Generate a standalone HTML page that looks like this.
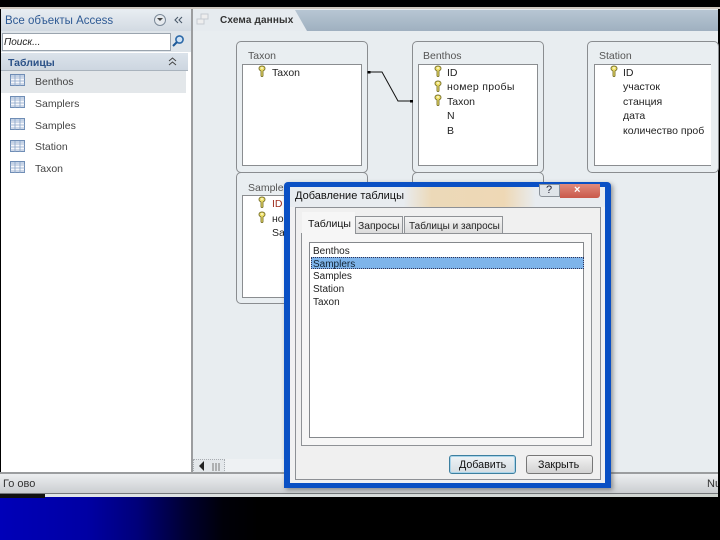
<!DOCTYPE html>
<html><head><meta charset="utf-8"><style>
html,body{margin:0;padding:0;background:#000}
#r{position:relative;width:720px;height:540px;overflow:hidden;background:#000;font-family:"Liberation Sans",sans-serif;font-size:10.5px;color:#222}
#r div,#r svg{position:absolute}
.t{white-space:nowrap;line-height:13px;margin-top:1px}
.box{width:130px;height:130px;border:1px solid #8a8d90;border-radius:5px;background:#e9eef1}
.in{background:#fff;border:1px solid #8a8d90}
.nm{color:#555;font-size:10.5px}
</style></head><body><div id="r">
<svg width="0" height="0" style="position:absolute"><defs>
<symbol id="k" viewBox="0 0 8 12"><path d="M4 1C2 1 1 2 1 3.500C1 5 2 5.500 3 6V11L4 12L5 11V6C6 5.500 7 5 7 3.500C7 2 6 1 4 1Z" fill="#efe06a" stroke="#77702a" stroke-width=".9"/><path d="M3 3h2" stroke="#fff" stroke-width="1"/></symbol>
<symbol id="g" viewBox="0 0 15 12"><rect x=".5" y=".5" width="14" height="11" fill="#f6f8fb" stroke="#6f8db5"/><rect x="1" y="1" width="13" height="2" fill="#c3d2e6"/><path d="M0 4h15M0 7h15M0 10h15M5 1v11M10 1v11" stroke="#8aa4c8" stroke-width=".8"/></symbol>
</defs></svg>

<div style="left:0;top:7px;width:720px;height:2px;background:#cfc8bf"></div>
<div style="left:1px;top:9px;width:717px;height:465px;background:#e8edf0"></div>

<!-- sidebar -->
<div style="left:1px;top:10px;width:190px;height:464px;background:#fff"></div>
<div style="left:1px;top:10px;width:190px;height:21px;background:linear-gradient(#e8edf2,#d2dae2)"></div>
<div class="t" style="left:5px;top:14px;font-size:11.500px;color:#2e5a94">Все объекты Access</div>
<div style="left:154px;top:14px;width:10px;height:10px;border:1px solid #7c8a99;border-radius:50%;background:#e6eaee"></div>
<svg style="left:156px;top:17px" width="8" height="6"><path d="M1 1L4 4L7 1Z" fill="#444"/></svg>
<svg style="left:174px;top:16px" width="9" height="8"><path d="M4 1L1 4L4 7M8 1L5 4L8 7" fill="none" stroke="#4a5a6a" stroke-width="1.1"/></svg>
<div style="left:1px;top:31px;width:190px;height:21px;background:#dfe5ea"></div>
<div style="left:2px;top:33px;width:167px;height:16px;background:#fff;border:1px solid #9aa4ae"></div>
<div class="t" style="left:4px;top:35px;font-style:italic;font-size:10px;color:#222">Поиск...</div>
<svg style="left:171px;top:34px" width="14" height="14"><circle cx="8.500" cy="5.500" r="3.600" fill="#cfe2f5" stroke="#2d6aa8" stroke-width="1.600"/><path d="M6 8L2 12" stroke="#1d5a98" stroke-width="2"/></svg>
<div style="left:1px;top:53px;width:187px;height:17px;background:linear-gradient(#dbe3eb,#cdd6e0);border-bottom:1px solid #a9b3bd"></div>
<div class="t" style="left:8px;top:56px;font-weight:bold;font-size:10.500px;color:#2c5288">Таблицы</div>
<svg style="left:168px;top:57px" width="9" height="10"><path d="M1 4L4.500 1L8 4M1 8L4.500 5L8 8" fill="none" stroke="#444" stroke-width="1"/></svg>
<div style="left:1px;top:71px;width:185px;height:22px;background:#e3e7ea"></div>
<svg style="left:10px;top:74px" width="15" height="12"><use href="#g"/></svg>
<svg style="left:10px;top:96px" width="15" height="12"><use href="#g"/></svg>
<svg style="left:10px;top:118px" width="15" height="12"><use href="#g"/></svg>
<svg style="left:10px;top:140px" width="15" height="12"><use href="#g"/></svg>
<svg style="left:10px;top:161px" width="15" height="12"><use href="#g"/></svg>
<div class="t" style="left:35px;top:75px;color:#444">Benthos</div>
<div class="t" style="left:35px;top:97px;color:#444">Samplers</div>
<div class="t" style="left:35px;top:119px;color:#444">Samples</div>
<div class="t" style="left:35px;top:140px;color:#444">Station</div>
<div class="t" style="left:35px;top:162px;color:#444">Taxon</div>
<div style="left:191px;top:9px;width:2px;height:465px;background:#9b9d9f"></div>

<!-- tab strip -->
<div style="left:193px;top:10px;width:525px;height:21px;background:linear-gradient(#b7c6d3,#9fb0c0)"></div>
<svg style="left:193px;top:10px" width="115" height="21"><path d="M0 0H102L114 21H0Z" fill="#e6ebef"/></svg>
<svg style="left:196px;top:13px" width="18" height="12"><path d="M5 1h7v5h-7zM1 6h7v5h-7z" fill="#eee" stroke="#c5cbd1"/></svg>
<div class="t" style="left:220px;top:13px;font-size:10px;font-weight:bold;color:#333;letter-spacing:.15px">Схема данных</div>

<!-- table boxes -->
<div class="box" style="left:236px;top:41px"></div>
<div class="box" style="left:412px;top:41px"></div>
<div class="box" style="left:587px;top:41px"></div>
<div class="box" style="left:236px;top:172px"></div>
<div class="box" style="left:412px;top:172px"></div>
<div class="nm t" style="left:248px;top:49px">Taxon</div>
<div class="nm t" style="left:423px;top:49px">Benthos</div>
<div class="nm t" style="left:599px;top:49px">Station</div>
<div class="nm t" style="left:248px;top:181px">Samplers</div>
<div class="in" style="left:242px;top:64px;width:118px;height:100px"></div>
<div class="in" style="left:418px;top:64px;width:118px;height:100px"></div>
<div class="in" style="left:594px;top:64px;width:116px;height:100px;border-right:none"></div>
<div class="in" style="left:242px;top:195px;width:118px;height:101px"></div>
<svg style="left:258px;top:65px" width="8" height="12"><use href="#k"/></svg>
<div class="t" style="left:272px;top:66px">Taxon</div>
<svg style="left:434px;top:65px" width="8" height="12"><use href="#k"/></svg>
<svg style="left:434px;top:80px" width="8" height="12"><use href="#k"/></svg>
<svg style="left:434px;top:94px" width="8" height="12"><use href="#k"/></svg>
<div class="t" style="left:447px;top:66px">ID</div>
<div class="t" style="left:447px;top:80px;letter-spacing:.3px">номер пробы</div>
<div class="t" style="left:447px;top:95px">Taxon</div>
<div class="t" style="left:447px;top:109px">N</div>
<div class="t" style="left:447px;top:124px">B</div>
<svg style="left:610px;top:65px" width="8" height="12"><use href="#k"/></svg>
<div class="t" style="left:623px;top:66px">ID</div>
<div class="t" style="left:623px;top:80px">участок</div>
<div class="t" style="left:623px;top:95px">станция</div>
<div class="t" style="left:623px;top:109px">дата</div>
<div class="t" style="left:623px;top:124px">количество проб</div>
<svg style="left:258px;top:196px" width="8" height="12"><use href="#k"/></svg>
<svg style="left:258px;top:211px" width="8" height="12"><use href="#k"/></svg>
<div class="t" style="left:272px;top:197px;color:#a03020">ID</div>
<div class="t" style="left:272px;top:212px">номер</div>
<div class="t" style="left:272px;top:226px">Sa</div>
<svg style="left:366px;top:68px" width="48" height="36"><path d="M2 4H16L32 33H46" fill="none" stroke="#111" stroke-width="1"/><rect x="1.500" y="3" width="3" height="2.500" fill="#000"/><rect x="44" y="32" width="3" height="2.500" fill="#000"/></svg>

<!-- scrollbar bottom -->
<div style="left:193px;top:459px;width:32px;height:14px;background:#e4e8eb;border:1px dotted #a8adb2;box-sizing:border-box"></div>
<svg style="left:198px;top:461px" width="8" height="10"><path d="M6 0V10L1 5Z" fill="#222"/></svg>
<svg style="left:211px;top:463px" width="10" height="8"><path d="M2 0v8M5 0v8M8 0v8" stroke="#777"/></svg>
<div style="left:225px;top:459px;width:60px;height:14px;background:#eef1f3"></div>

<!-- status bar -->
<div style="left:0;top:472px;width:718px;height:2px;background:#9b9d9f"></div>
<div style="left:0;top:474px;width:718px;height:20px;background:linear-gradient(#eceef0,#c9cccf)"></div>
<div style="left:0;top:493px;width:718px;height:1px;background:#75787b"></div>
<div style="left:0;top:494px;width:718px;height:3px;background:linear-gradient(90deg,#e4e8ea,#cfd4d0)"></div>
<div class="t" style="left:3px;top:477px;color:#333;font-size:11px">Го ово</div>
<div class="t" style="left:707px;top:477px;color:#333;font-size:11px;width:11px;overflow:hidden">Num</div>

<!-- bottom -->
<div style="left:0;top:497px;width:720px;height:43px;background:linear-gradient(90deg,#0000b8 0,#0000a4 12%,#00007a 19%,#000030 26%,#000008 31%,#000 36%)"></div>
<div style="left:0;top:494px;width:45px;height:4px;background:#111"></div>

<!-- dialog -->
<div style="left:284px;top:182px;width:327px;height:306px;background:#0a50c4;border-radius:4px 4px 0 0;box-shadow:2px 2px 5px rgba(60,60,60,.5)"></div>
<div style="left:290px;top:187px;width:315px;height:296px;background:#f1f1f2"></div>
<div style="left:290px;top:187px;width:315px;height:20px;background:linear-gradient(90deg,#e8ecf0 0,#e8ecf0 36%,#ecd9b8 45%,#eed8b5 68%,#e8ecf0 78%)"></div>
<div class="t" style="left:295px;top:189px;font-size:11px;color:#111">Добавление таблицы</div>
<div style="left:539px;top:184px;width:21px;height:13px;background:#dfe4e9;border:1px solid #8b929a;border-radius:0 0 0 3px;box-sizing:border-box"></div>
<div class="t" style="left:546px;top:183px;font-size:11px;color:#223">?</div>
<div style="left:560px;top:184px;width:40px;height:14px;background:linear-gradient(#e08a7c,#c9584a);border-radius:0 0 3px 0"></div>
<div class="t" style="left:574px;top:183px;font-size:11px;font-weight:bold;color:#fff">×</div>
<div style="left:295px;top:207px;width:306px;height:273px;background:#f0f0f0;border:1px solid #8d9095;box-sizing:border-box"></div>
<!-- tabs -->
<div style="left:301px;top:233px;width:291px;height:213px;background:#f6f6f6;border:1px solid #8f9296;box-sizing:border-box"></div>
<div style="left:355px;top:216px;width:48px;height:18px;background:linear-gradient(#f4f4f4,#dcdcdc);border:1px solid #8f9296;box-sizing:border-box"></div>
<div style="left:404px;top:216px;width:99px;height:18px;background:linear-gradient(#f4f4f4,#dcdcdc);border:1px solid #8f9296;box-sizing:border-box"></div>
<div style="left:302px;top:212px;width:53px;height:23px;background:#f6f6f6"></div>
<div class="t" style="left:308px;top:217px;font-size:10.500px;color:#111">Таблицы</div>
<div class="t" style="left:358px;top:219px;font-size:10.300px;color:#222">Запросы</div>
<div class="t" style="left:409px;top:219px;font-size:10px;color:#222">Таблицы и запросы</div>
<div style="left:309px;top:242px;width:275px;height:196px;background:#fff;border:1px solid #85888c;box-sizing:border-box"></div>
<div style="left:311px;top:257px;width:273px;height:12px;background:#7eb4ea;border:1px dotted #335;box-sizing:border-box"></div>
<div class="t" style="left:313px;top:244px;font-size:10px;color:#222">Benthos</div>
<div class="t" style="left:313px;top:257px;font-size:10px;color:#123">Samplers</div>
<div class="t" style="left:313px;top:269px;font-size:10px;color:#222">Samples</div>
<div class="t" style="left:313px;top:282px;font-size:10px;color:#222">Station</div>
<div class="t" style="left:313px;top:295px;font-size:10px;color:#222">Taxon</div>
<!-- buttons -->
<div style="left:449px;top:455px;width:67px;height:19px;background:linear-gradient(#eef3f6,#d5dde2);border:1px solid #3d7f9f;border-radius:3px;box-sizing:border-box;box-shadow:inset 0 0 0 1px #a8d4ea"></div>
<div class="t" style="left:459px;top:458px;font-size:10.700px;color:#111">Добавить</div>
<div style="left:526px;top:455px;width:67px;height:19px;background:linear-gradient(#f3f3f3,#d2d2d2);border:1px solid #777;border-radius:3px;box-sizing:border-box"></div>
<div class="t" style="left:538px;top:458px;font-size:10.700px;color:#111">Закрыть</div>
</div></body></html>
